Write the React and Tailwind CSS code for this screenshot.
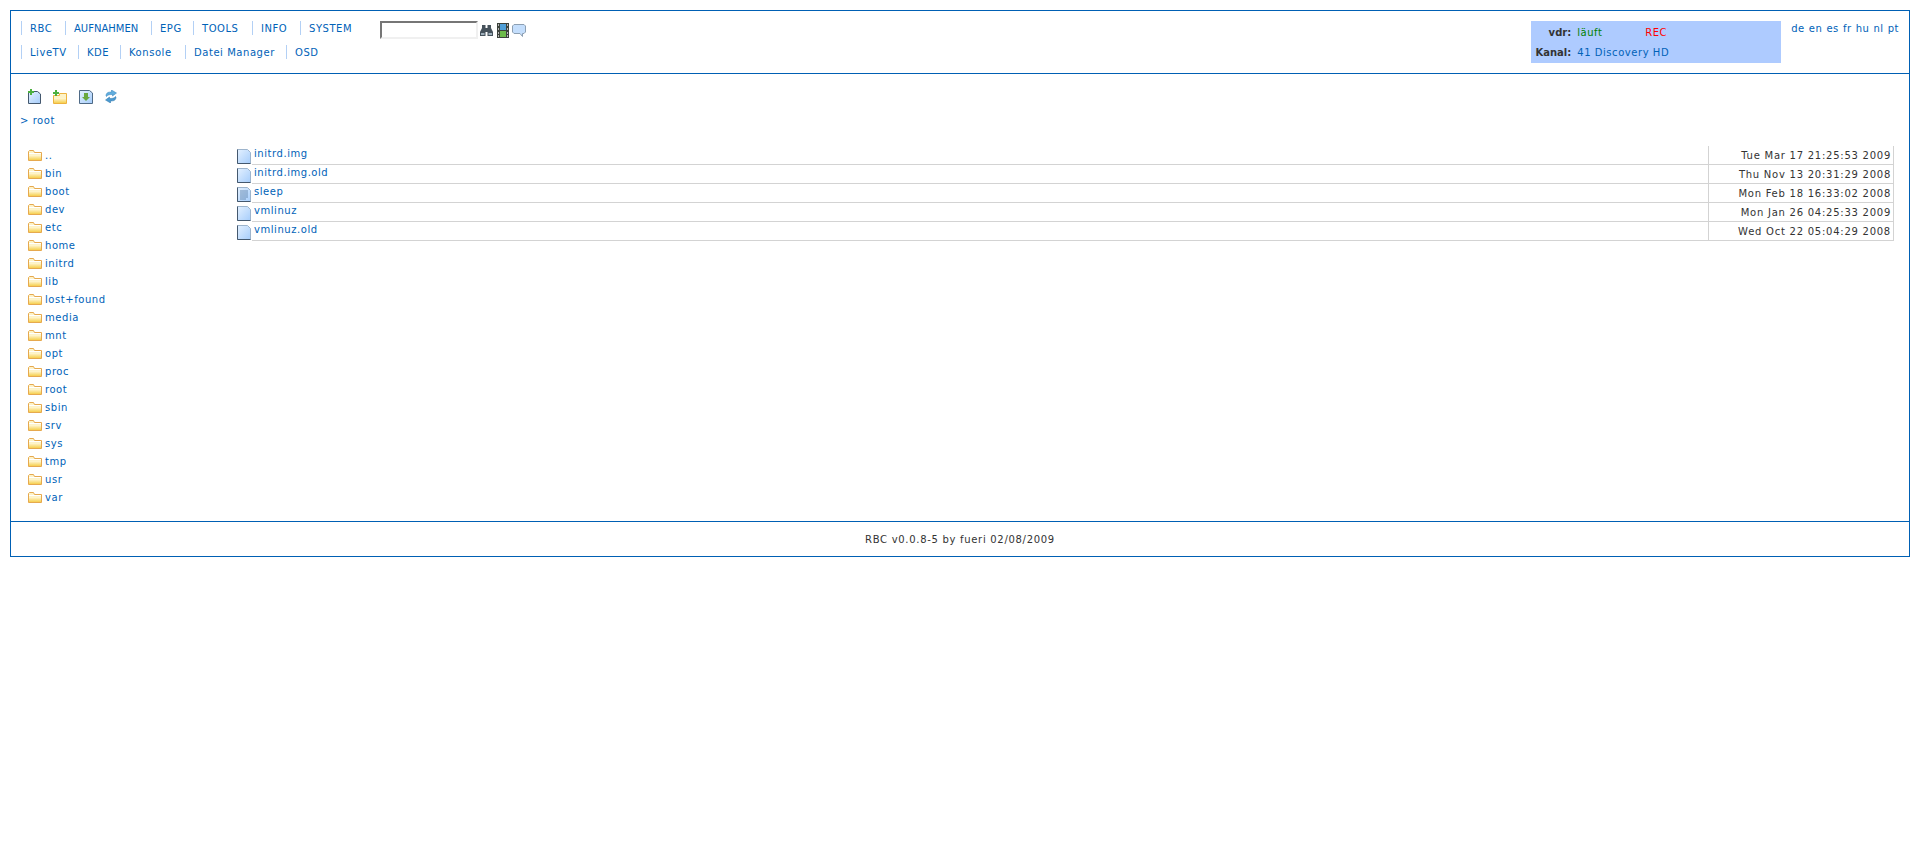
import React from 'react';

const menuOne = [
  { label: 'RBC', width: 'w-[44px]' },
  { label: 'AUFNAHMEN', width: 'w-[86px] tracking-normal' },
  { label: 'EPG', width: 'w-[42px]' },
  { label: 'TOOLS', width: 'w-[59px]' },
  { label: 'INFO', width: 'w-[48px]' },
  { label: 'SYSTEM', width: 'w-[60px]' },
];
const menuTwo = [
  { label: 'LiveTV', width: 'w-[57px]' },
  { label: 'KDE', width: 'w-[42px]' },
  { label: 'Konsole', width: 'w-[65px]' },
  { label: 'Datei Manager', width: 'w-[101px]' },
  { label: 'OSD', width: 'w-[40px]' },
];
const languages = ['de', 'en', 'es', 'fr', 'hu', 'nl', 'pt'];
const folders = ['..', 'bin', 'boot', 'dev', 'etc', 'home', 'initrd', 'lib', 'lost+found', 'media', 'mnt', 'opt', 'proc', 'root', 'sbin', 'srv', 'sys', 'tmp', 'usr', 'var'];
const files = [
  { name: 'initrd.img', date: 'Tue Mar 17 21:25:53 2009' },
  { name: 'initrd.img.old', date: 'Thu Nov 13 20:31:29 2008' },
  { name: 'sleep', date: 'Mon Feb 18 16:33:02 2008', text: true },
  { name: 'vmlinuz', date: 'Mon Jan 26 04:25:33 2009' },
  { name: 'vmlinuz.old', date: 'Wed Oct 22 05:04:29 2008' },
];

function Gradients() {
  return (
    <svg width="0" height="0" className="absolute">
      <defs>
        <linearGradient id="folderFill" x1="0" y1="0" x2="0" y2="1">
          <stop offset="0" stopColor="#fff8d8" />
          <stop offset="1" stopColor="#f6cf4e" />
        </linearGradient>
        <linearGradient id="fileFill" x1="0" y1="0" x2="1" y2="1">
          <stop offset="0" stopColor="#e4f1ff" />
          <stop offset="1" stopColor="#a6cdfb" />
        </linearGradient>
      </defs>
    </svg>
  );
}

function FolderIcon() {
  return (
    <svg width="14" height="11" viewBox="0 0 14 11" className="block shrink-0">
      <path d="M0.5 1.5V10.5H13.5V2.5H6.5L5.5 0.5H1.5Z" fill="#fdf3c8" stroke="#e6a94e" />
      <path d="M1 3H13V4H1Z" fill="#ffffff" />
      <path d="M1 5H13V10H1Z" fill="url(#folderFill)" />
    </svg>
  );
}

function FileIcon({ text }) {
  return (
    <svg width="14" height="15" viewBox="0 0 14 15" className="block shrink-0">
      <path d="M0.5 0.5H10.5L13.5 3.5V14.5H0.5Z" fill="url(#fileFill)" stroke="#9db4cc" />
      <path d="M0.5 14.5V0.5M0.5 14.5H13.5" stroke="#44586e" fill="none" />
      {text && <path d="M3 4H11M3 6H11M3 8H11M3 10H11M3 12H9" stroke="#6a8db4" />}
    </svg>
  );
}

function NewFileIcon() {
  return (
    <svg width="14" height="15" viewBox="0 0 14 15" className="block">
      <path d="M1.5 2.5H10.5L13.5 5V14.5H1.5Z" fill="url(#fileFill)" stroke="#44586e" />
      <path d="M3 0H5V2H7V4H5V6H3V4H1V2H3Z" fill="#4cb03f" />
    </svg>
  );
}

function NewFolderIcon() {
  return (
    <svg width="14" height="14" viewBox="0 0 14 14" className="block">
      <path d="M0.5 5.5V13.5H13.5V3.5H6.5V5.5Z" fill="#fdf3c8" stroke="#edb33f" />
      <path d="M1 8H13V13H1Z" fill="url(#folderFill)" />
      <path d="M2 0H4V2H6V4H4V6H2V4H0V2H2Z" fill="#4cb03f" />
    </svg>
  );
}

function UploadIcon() {
  return (
    <svg width="14" height="14" viewBox="0 0 14 14" className="block">
      <path d="M0.5 0.5H10.5L13.5 3V13.5H0.5Z" fill="url(#fileFill)" stroke="#4f6a86" />
      <path d="M5 3H9V7H11L7 11L3 7H5Z" fill="#69a83f" />
    </svg>
  );
}

function RefreshIcon() {
  return (
    <svg width="12" height="13" viewBox="0 0 12 13" className="block">
      <path d="M1 6C1 2.5 3.5 2 6.5 2V0L11.5 3L7.5 6V4.5C5 4.5 3 4.5 1.5 6.5Z" fill="#62aede" stroke="#2f7fb8" strokeWidth="0.5" />
      <path d="M11 7C11 10.5 8.5 11 5.5 11V13L0.5 10L4.5 7V8.5C7 8.5 9 8.5 10.5 6.5Z" fill="#4b9ad0" stroke="#2a72a8" strokeWidth="0.5" />
    </svg>
  );
}

function BinocularsIcon() {
  return (
    <svg width="13" height="12" viewBox="0 0 13 12" className="block">
      <path d="M2 1H5.5V4H7.5V1H11V4L13 8V12H7.5V8H5.5V12H0V8L2 4Z" fill="#46525c" />
      <path d="M1 9H4.5V11H1ZM8.5 9H12V11H8.5Z" fill="#9fb0bc" />
    </svg>
  );
}

function FilmIcon() {
  return (
    <svg width="12" height="15" viewBox="0 0 12 15" className="block">
      <rect width="12" height="15" fill="#3c423c" />
      <rect x="3" y="1" width="6" height="6" fill="#4f9fd8" />
      <rect x="3" y="8" width="6" height="6" fill="#6dbb4a" />
      <path d="M1 1H2V3H1ZM1 5H2V7H1ZM1 9H2V11H1ZM1 12H2V14H1ZM10 1H11V3H10ZM10 5H11V7H10ZM10 9H11V11H10ZM10 12H11V14H10Z" fill="#b8b8b8" />
    </svg>
  );
}

function ChatIcon() {
  return (
    <svg width="14" height="13" viewBox="0 0 14 13" className="block">
      <path d="M2 0.5H12L13.5 2V8L12 9.5H10.5V12.5L8 9.5H2L0.5 8V2Z" fill="#c4defc" stroke="#8c9fb2" />
    </svg>
  );
}

function MenuRow({ items }) {
  return (
    <div className="flex">
      {items.map((item) => (
        <a key={item.label} className={`border-l border-[#b3d0f5] pl-2 h-[14px] leading-[16px] text-[#0062b8] whitespace-nowrap ${item.width}`}>
          {item.label}
        </a>
      ))}
    </div>
  );
}

export default function App() {
  return (
    <div className="bg-white p-[10px] text-[10px] tracking-[0.55px] text-[#0062b8] font-['DejaVu_Sans','Liberation_Sans',sans-serif]">
      <Gradients />
      <div className="border border-[#0060b4]">
        <header className="h-[63px] border-b border-[#0060b4] flex pl-[10px] pr-[10px] pt-[10px]">
          <div className="flex flex-col gap-[6px]">
            <div className="flex items-start h-[18px]">
              <MenuRow items={menuOne} />
              <input className="ml-[20px] w-[98px] h-[18px] border-2 border-t-[#767676] border-l-[#767676] border-r-[#f0f0f0] border-b-[#f0f0f0] bg-white" />
              <div className="flex items-center ml-[2px] h-[18px]">
                <BinocularsIcon />
                <div className="ml-[4px]">
                  <FilmIcon />
                </div>
                <div className="ml-[3px]">
                  <ChatIcon />
                </div>
              </div>
            </div>
            <MenuRow items={menuTwo} />
          </div>
          <div className="ml-auto flex">
            <div className="w-[250px] h-[42px] bg-[#aecbff] flex flex-col">
              <div className="flex h-[21px] items-center pt-[2px]">
                <span className="w-[40px] text-right font-bold tracking-normal text-[#333]">vdr:</span>
                <span className="ml-[6px] w-[68px] text-[#008000]">läuft</span>
                <span className="text-[#ff0000]">REC</span>
              </div>
              <div className="flex h-[21px] items-center">
                <span className="w-[40px] text-right font-bold tracking-normal text-[#333] whitespace-nowrap">Kanal:</span>
                <span className="ml-[6px]">41 Discovery HD</span>
              </div>
            </div>
            <div className="ml-[10px] flex gap-[4px] h-[14px] leading-[16px]">
              {languages.map((lang) => (
                <a key={lang}>{lang}</a>
              ))}
            </div>
          </div>
        </header>

        <main className="h-[447px] pl-[9px] pr-[15px] pt-[15px]">
          <div className="flex items-center gap-[12px] pl-[7px] h-[15px]">
            <NewFileIcon />
            <NewFolderIcon />
            <UploadIcon />
            <RefreshIcon />
          </div>
          <div className="mt-[10px] h-[14px] leading-[14px]">&gt; root</div>
          <div className="flex mt-[18px]">
            <ul className="w-[217px] shrink-0 pl-[8px]">
              {folders.map((folder) => (
                <li key={folder} className="flex items-center gap-[3px] h-[18px]">
                  <FolderIcon />
                  <span>{folder}</span>
                </li>
              ))}
            </ul>
            <div className="flex-1">
              {files.map((file) => (
                <div key={file.name} className="flex h-[19px]">
                  <div className="w-[15px] shrink-0 pt-[3px]">
                    <FileIcon text={file.text} />
                  </div>
                  <div className="flex-1 border-b border-[#d3d3d3] leading-[14px] pl-[2px] pt-[1px]">{file.name}</div>
                  <div className="w-[186px] border-l border-r border-b border-[#d3d3d3] text-right pr-[2px] pt-[2px] leading-[16px] tracking-[0.75px] text-[#333]">
                    {file.date}
                  </div>
                </div>
              ))}
            </div>
          </div>
        </main>

        <footer className="h-[35px] border-t border-[#0060b4] flex items-center justify-center tracking-[0.7px] text-[#333]">
          RBC v0.0.8-5 by fueri 02/08/2009
        </footer>
      </div>
    </div>
  );
}
